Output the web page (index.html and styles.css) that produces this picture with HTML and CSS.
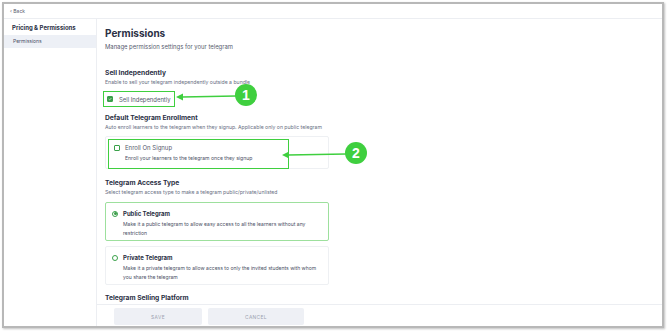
FILE: index.html
```html
<!DOCTYPE html>
<html>
<head>
<meta charset="utf-8">
<link rel="stylesheet" href="styles.css">
</head>
<body>
<div class="frame">
  <div class="topbar"><span class="back">‹ Back</span></div>
  <div class="body">
    <aside class="sidebar">
      <div class="side-title">Pricing &amp; Permissions</div>
      <div class="side-item">Permissions</div>
    </aside>
    <main class="main">
      <div class="content">
        <h1 class="title">Permissions</h1>
        <p class="subtitle">Manage permission settings for your telegram</p>

        <section class="section s-sell">
          <h2 class="sec-title">Sell Independently</h2>
          <p class="sec-desc">Enable to sell your telegram independently outside a bundle</p>
          <div class="check-row hl">
            <span class="checkbox checked"><svg viewBox="0 0 8 8" width="6" height="6"><path d="M1.3 4.1 L3.2 5.9 L6.8 2.1" fill="none" stroke="#fff" stroke-width="1.3"/></svg></span>
            <span class="check-label">Sell Independently</span>
          </div>
        </section>

        <section class="section s-enroll">
          <h2 class="sec-title">Default Telegram Enrollment</h2>
          <p class="sec-desc">Auto enroll learners to the telegram when they signup. Applicable only on public telegram</p>
          <div class="card">
            <div class="enroll hl">
              <div class="enroll-top">
                <span class="checkbox"></span>
                <span class="check-label">Enroll On Signup</span>
              </div>
              <p class="enroll-desc">Enroll your learners to the telegram once they signup</p>
            </div>
          </div>
        </section>

        <section class="section s-access">
          <h2 class="sec-title">Telegram Access Type</h2>
          <p class="sec-desc">Select telegram access type to make a telegram public/private/unlisted</p>
          <div class="option selected">
            <div class="opt-head"><span class="radio on"></span><span class="opt-title">Public Telegram</span></div>
            <p class="opt-desc">Make it a public telegram to allow easy access to all the learners without any restriction</p>
          </div>
          <div class="option">
            <div class="opt-head"><span class="radio"></span><span class="opt-title">Private Telegram</span></div>
            <p class="opt-desc">Make it a private telegram to allow access to only the invited students with whom you share the telegram</p>
          </div>
        </section>

        <h2 class="sec-title last">Telegram Selling Platform</h2>
      </div>
      <footer class="footer">
        <button class="btn save">SAVE</button>
        <button class="btn cancel">CANCEL</button>
      </footer>
    </main>
  </div>

  <svg class="callout c1" width="86" height="26" viewBox="0 0 86 26">
    <line x1="8" y1="14" x2="62" y2="13" stroke="#3fcf3f" stroke-width="1.6"/>
    <path d="M2 14 L9 10.5 L9 17.5 Z" fill="#3fcf3f"/>
    <circle cx="72" cy="12" r="11" fill="#3fcf3f"/>
    <text x="72" y="17" text-anchor="middle" class="num">1</text>
  </svg>
  <svg class="callout c2" width="90" height="26" viewBox="0 0 90 26">
    <line x1="8" y1="14" x2="66" y2="13" stroke="#3fcf3f" stroke-width="1.6"/>
    <path d="M2 14 L9 10.5 L9 17.5 Z" fill="#3fcf3f"/>
    <circle cx="76" cy="12" r="11" fill="#3fcf3f"/>
    <text x="76" y="17" text-anchor="middle" class="num">2</text>
  </svg>
</div>
</body>
</html>
```
FILE: styles.css
```css
* { box-sizing: border-box; }
html, body { margin: 0; padding: 0; background: #fff; }
body {
  font-family: "Inter", "Lato", sans-serif;
  color: #2b3044;
  width: 670px;
  height: 332px;
  overflow: hidden;
}
.frame {
  position: relative;
  margin: 2px 0 0 2px;
  width: 662px;
  height: 326px;
  border: 2px solid #b8b8b8;
  box-shadow: 1px 1px 2px rgba(0,0,0,0.25);
  display: flex;
  flex-direction: column;
  overflow: hidden;
}
.topbar {
  height: 15px;
  border-bottom: 1px solid #eceef2;
  display: flex;
  align-items: center;
  padding-left: 6px;
}
.back { font-size: 5px; color: #555b6e; }
.body { flex: 1; display: flex; min-height: 0; }
.sidebar {
  width: 93px;
  border-right: 1px solid #eceef2;
  padding-top: 5px;
}
.side-title {
  font-size: 6px;
  font-weight: 700;
  color: #2b3044;
  padding: 0 0 0 8px;
  height: 11px;
}
.side-item {
  background: #edf0f6;
  font-size: 5px;
  color: #4b5166;
  padding-left: 9px;
  height: 13px;
  line-height: 13px;
}
.main {
  flex: 1;
  display: flex;
  flex-direction: column;
  min-width: 0;
}
.content { flex: 1; padding: 7px 0 0 8px; }
.title {
  margin: 0;
  font-size: 10px;
  font-weight: 700;
  color: #2b3044;
  line-height: 14px;
}
.subtitle {
  margin: 3px 0 0;
  font-size: 5.9px;
  color: #555b6e;
  line-height: 8px;
}
.s-sell { margin-top: 17px; }
.sec-title {
  margin: 0;
  font-size: 6.7px;
  font-weight: 700;
  color: #2b3044;
  line-height: 10px;
}
.sec-desc {
  margin: 0;
  font-size: 5.15px;
  color: #6a7084;
  line-height: 8px;
  white-space: nowrap;
}
.check-row {
  display: inline-flex;
  align-items: center;
  gap: 6px;
  margin: 2px 0 0 -2px;
  padding: 3px 3px 3px 3px;
  width: 72px;
  height: 16px;
}
.hl { border: 1.5px solid #3fcf3f; }
.checkbox {
  width: 6px;
  height: 6px;
  border: 1px solid #3aa14a;
  border-radius: 1px;
  display: inline-flex;
  align-items: center;
  justify-content: center;
  flex: none;
}
.checkbox.checked { background: #3a9b48; }
.check-label { font-size: 5.9px; color: #555b6e; white-space: nowrap; }
.enroll-top .check-label { font-size: 6px; }
.s-enroll { margin-top: 6px; }
.card {
  margin-top: 5px;
  width: 224px;
  height: 33px;
  border: 1px solid #eef0f3;
  border-radius: 2px;
  padding: 2px 0 0 2px;
}
.enroll {
  width: 181px;
  height: 30px;
  padding: 4px 0 0 5px;
}
.enroll-top { display: flex; align-items: center; gap: 5px; }
.enroll-desc {
  margin: 4px 0 0 11px;
  font-size: 5.1px;
  color: #4b5166;
  white-space: nowrap;
}
.s-access { margin-top: 9px; }
.option {
  width: 224px;
  height: 39px;
  border: 1px solid #eef0f3;
  border-radius: 2px;
  padding: 7px 6px 0 6px;
}
.option.selected { border: 1px solid #9de09d; margin-top: 6px; }
.option + .option { margin-top: 5px; }
.opt-head { display: flex; align-items: center; gap: 5px; }
.radio {
  width: 6px; height: 6px;
  border: 1px solid #3aa14a;
  border-radius: 50%;
  flex: none;
  display: inline-flex;
  align-items: center;
  justify-content: center;
}
.radio.on::after {
  content: "";
  width: 3px; height: 3px;
  border-radius: 50%;
  background: #3a9b48;
}
.opt-title { font-size: 6px; font-weight: 700; color: #2b3044; }
.opt-desc {
  margin: 3px 0 0 11px;
  font-size: 5.05px;
  line-height: 9px;
  color: #4b5166;
}
.last { margin-top: 8px; }
.footer {
  height: 22px;
  border-top: 1px solid #eceef2;
  display: flex;
  gap: 6px;
  padding: 3px 0 0 17px;
}
.btn {
  border: none;
  background: #eef0f5;
  border-radius: 2px;
  font-family: inherit;
  font-size: 4.8px;
  letter-spacing: 0.4px;
  color: #9aa0ae;
  height: 17px;
  padding: 0;
}
.save { width: 88px; }
.cancel { width: 96px; }
.callout { position: absolute; }
.c1 { left: 170px; top: 79px; }
.c2 { left: 276px; top: 137px; }
.num {
  font-family: "Liberation Sans", sans-serif;
  font-weight: 700;
  font-size: 14px;
  fill: #fff;
}
```
